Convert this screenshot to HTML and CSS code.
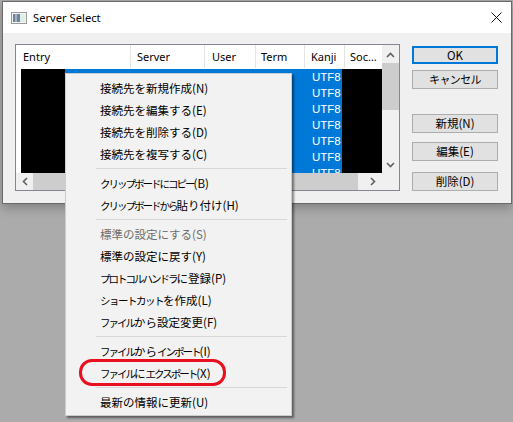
FILE: index.html
```html
<!DOCTYPE html>
<html lang="ja">
<head>
<meta charset="utf-8">
<title>Server Select</title>
<link rel="stylesheet" href="styles.css">
</head>
<body>
<div class="window">
  <div class="titlebar">
    <svg class="appicon" width="16" height="12" viewBox="0 0 16 12">
      <rect x="0.5" y="0.5" width="15" height="11" fill="#f4f4f4" stroke="#9a9a9a"/>
      <rect x="2" y="2" width="7" height="8" fill="#6f8597"/>
      <rect x="4" y="2" width="2" height="8" fill="#9fb4c4"/>
      <rect x="9" y="2" width="5" height="8" fill="#dfeee6"/>
    </svg>
    <span class="title">Server Select</span>
    <svg class="close" width="11" height="11" viewBox="0 0 11 11">
      <path d="M0.5 0.5 L10.5 10.5 M10.5 0.5 L0.5 10.5" stroke="#111" stroke-width="1"/>
    </svg>
  </div>
  <div class="content">
    <div class="listview">
      <div class="main">
        <div class="header">
          <div class="col c-entry">Entry</div>
          <div class="col c-server">Server</div>
          <div class="col c-user">User</div>
          <div class="col c-term">Term</div>
          <div class="col c-kanji">Kanji</div>
          <div class="col c-soc">Soc…</div>
        </div>
        <div class="rows">
          <div class="gap"></div>
          <div class="redact left"></div>
          <div class="sel">
            <div class="row"><span class="r-kanji">UTF8</span></div>
            <div class="row"><span class="r-kanji">UTF8</span></div>
            <div class="row"><span class="r-kanji">UTF8</span></div>
            <div class="row"><span class="r-kanji">UTF8</span></div>
            <div class="row"><span class="r-kanji">UTF8</span></div>
            <div class="row"><span class="r-kanji">UTF8</span></div>
            <div class="row"><span class="r-kanji">UTF8</span></div>
          </div>
          <div class="redact right"></div>
        </div>
      </div>
      <div class="vscroll">
        <svg class="arrow" width="9" height="6" viewBox="0 0 9 6"><polyline points="1,5 4.5,1.5 8,5" fill="none" stroke="#606060" stroke-width="1.6"/></svg>
        <div class="vthumb"></div>
        <div class="vspace"></div>
        <svg class="arrow" width="9" height="6" viewBox="0 0 9 6"><polyline points="1,1 4.5,4.5 8,1" fill="none" stroke="#606060" stroke-width="1.6"/></svg>
      </div>
      <div class="hscroll">
        <svg class="harrow" width="6" height="9" viewBox="0 0 6 9"><polyline points="5,1 1.5,4.5 5,8" fill="none" stroke="#606060" stroke-width="1.6"/></svg>
        <div class="hthumb"></div>
        <svg class="harrow" width="6" height="9" viewBox="0 0 6 9"><polyline points="1,1 4.5,4.5 1,8" fill="none" stroke="#606060" stroke-width="1.6"/></svg>
      </div>
      <div class="corner"></div>
    </div>
    <div class="buttons">
      <div class="btn default">OK</div>
      <div class="btn b-cancel"><span class="kb">キャンセル</span></div>
      <div class="btn b-new">新規(N)</div>
      <div class="btn b-edit">編集(E)</div>
      <div class="btn b-del">削除(D)</div>
    </div>
  </div>
</div>

<div class="menu">
  <div class="item">接続先を新規作成(N)</div>
  <div class="item">接続先を編集する(E)</div>
  <div class="item">接続先を削除する(D)</div>
  <div class="item">接続先を複写する(C)</div>
  <div class="sep"></div>
  <div class="item"><span class="k">クリップボードにコピー</span>(B)</div>
  <div class="item"><span class="k">クリップボードから</span>貼り付け(H)</div>
  <div class="sep"></div>
  <div class="item disabled">標準の設定にする(S)</div>
  <div class="item">標準の設定に戻す(Y)</div>
  <div class="item"><span class="k">プロトコルハンドラ</span>に登録(P)</div>
  <div class="item"><span class="k k2">ショートカット</span>を作成(L)</div>
  <div class="item"><span class="k">ファイル</span>から設定変更(F)</div>
  <div class="sep"></div>
  <div class="item"><span class="k">ファイル</span>から<span class="k">インポート</span>(I)</div>
  <div class="item"><span class="k">ファイル</span>に<span class="k">エクスポート</span>(X)</div>
  <div class="sep"></div>
  <div class="item">最新の情報に更新(U)</div>
  <div class="mark"></div>
</div>
</body>
</html>
```
FILE: styles.css
```css
html, body {
  margin: 0;
  padding: 0;
}
body {
  background: #ababab;
  width: 513px;
  height: 422px;
  position: relative;
  overflow: hidden;
  font-family: "Noto Sans", "Noto Sans CJK JP", sans-serif;
  font-size: 11px;
  color: #000;
}
.window {
  margin: 1px 0 0 2px;
  width: 510px;
  height: 203px;
  box-sizing: border-box;
  border: 1px solid #6a6a6a;
  background: #f0f0f0;
  box-shadow: 0 4px 10px rgba(0,0,0,0.25);
}
.titlebar {
  height: 31px;
  background: #fff;
  display: flex;
  align-items: center;
}
.appicon {
  margin-left: 8px;
  margin-top: 1px;
}
.title {
  margin-left: 6px;
  font-size: 11.2px;
  flex: 1;
}
.close {
  margin-right: 9px;
}
.content {
  display: flex;
  padding: 11px 0 0 12px;
}
.listview {
  width: 385px;
  height: 147px;
  box-sizing: border-box;
  border: 1px solid #828790;
  background: #fff;
  display: grid;
  grid-template-columns: 366px 17px;
  grid-template-rows: 128px 17px;
}
.main {
  overflow: hidden;
}
.header {
  height: 23px;
  display: flex;
}
.col {
  box-sizing: border-box;
  border-right: 1px solid #e5e5e5;
  padding-left: 6px;
  line-height: 23px;
  white-space: nowrap;
  overflow: hidden;
}
.c-entry { width: 115px; padding-left: 7px; }
.c-server { width: 74px; }
.c-user { width: 51px; padding-left: 7px; }
.c-term { width: 49px; padding-left: 5px; }
.c-kanji { width: 40px; }
.c-soc { width: 37px; border-right: none; padding-left: 5px; }
.rows {
  height: 105px;
  display: flex;
  overflow: hidden;
}
.gap { width: 5px; }
.redact {
  background: #000;
  margin-top: 1px;
}
.redact.left { width: 44px; }
.redact.right { width: 40px; }
.sel {
  width: 277px;
  margin-top: 1px;
  background: #0078d7;
  color: #fff;
  font-family: "Liberation Sans", sans-serif;
  font-size: 11.5px;
}
.row {
  height: 16px;
  line-height: 16px;
  display: flex;
}
.r-kanji { margin-left: 247px; }
.vscroll {
  grid-row: 1 / 3;
  grid-column: 2;
  background: #f0f0f0;
  display: flex;
  flex-direction: column;
  align-items: center;
  height: 128px;
}
.arrow { margin-top: 7px; flex: none; }
.vthumb {
  width: 17px;
  height: 47px;
  background: #cdcdcd;
  margin-top: 5px;
}
.vspace { flex: 1; }
.vscroll .arrow:last-child { margin: 0 0 5px 0; }
.hscroll {
  grid-row: 2;
  grid-column: 1;
  background: #f0f0f0;
  display: flex;
  align-items: center;
}
.harrow { margin-left: 6px; flex: none; }
.hthumb {
  width: 325px;
  height: 17px;
  background: #cdcdcd;
  margin-left: 5px;
}
.hscroll .harrow:last-child { margin-left: 12px; }
.corner {
  grid-row: 2;
  grid-column: 2;
  background: #f0f0f0;
}
.buttons {
  margin-left: 12px;
  padding-top: 2px;
  display: flex;
  flex-direction: column;
}
.btn {
  width: 86px;
  height: 19px;
  box-sizing: border-box;
  border: 1px solid #adadad;
  background: #e1e1e1;
  text-align: center;
  line-height: 17px;
  font-family: "Noto Sans CJK JP", sans-serif;
  font-size: 11.5px;
}
.kb { font-size: 11px; letter-spacing: -0.6px; }
.btn.default {
  height: 18px;
  border: 2px solid #0078d7;
  line-height: 14px;
}
.b-cancel { margin-top: 6px; }
.b-new { margin-top: 25px; }
.b-edit { margin-top: 9px; }
.b-del { margin-top: 11px; }
.menu {
  position: absolute;
  left: 65px;
  top: 73px;
  width: 227px;
  height: 343px;
  box-sizing: border-box;
  background: #f2f2f2;
  border: 1px solid #cccccc;
  padding: 3px 2px 2px 2px;
  box-shadow: 2px 2px 2px rgba(0,0,0,0.45);
  font-family: "Noto Sans CJK JP", sans-serif;
  font-size: 11.5px;
}
.item {
  height: 22px;
  line-height: 22px;
  padding-left: 32px;
  white-space: nowrap;
}
.k { font-size: 10.5px; letter-spacing: -2px; }
.k2 { letter-spacing: -1.5px; }
.item.disabled { color: #6d6d6d; }
.sep {
  height: 7px;
  display: flex;
  align-items: center;
  padding-left: 28px;
  padding-right: 2px;
}
.sep::before {
  content: "";
  flex: 1;
  height: 1px;
  background: #d7d7d7;
}
.mark {
  position: absolute;
  left: 13px;
  top: 285px;
  width: 147px;
  height: 27px;
  box-sizing: border-box;
  border: 3px solid #e8101f;
  border-radius: 13px;
}
```
